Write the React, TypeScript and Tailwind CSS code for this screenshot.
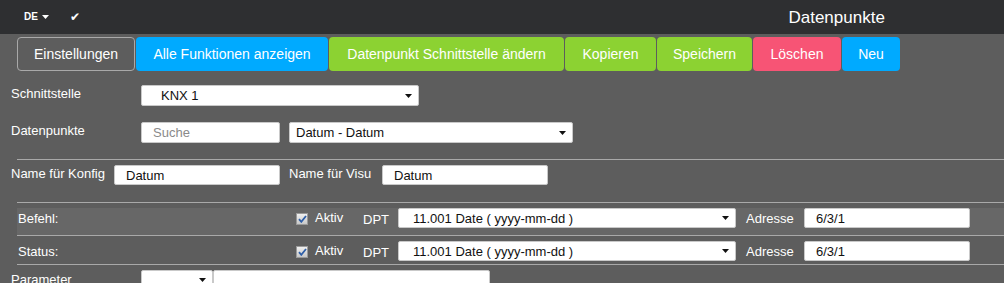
import type { ReactNode } from 'react';

const buttons = [
  { label: 'Einstellungen', w: 'w-[118px]', cls: 'bg-[#5d5d5d] border border-[#a9a9a9]' },
  { label: 'Alle Funktionen anzeigen', w: 'w-[192px]', cls: 'bg-[#00aaff]' },
  { label: 'Datenpunkt Schnittstelle ändern', w: 'w-[235px]', cls: 'bg-[#8cd232]' },
  { label: 'Kopieren', w: 'w-[91px]', cls: 'bg-[#8cd232]' },
  { label: 'Speichern', w: 'w-[95px]', cls: 'bg-[#8cd232]' },
  { label: 'Löschen', w: 'w-[88px]', cls: 'bg-[#f75475]' },
  { label: 'Neu', w: 'w-[58px]', cls: 'bg-[#00aaff]' },
];

function Caret({ color = '#111' }: { color?: string }) {
  return (
    <svg width="7" height="4" viewBox="0 0 7 4" className="shrink-0">
      <path d="M0 0h7L3.5 4z" fill={color} />
    </svg>
  );
}

function Select({ value, className, padL }: { value: string; className: string; padL: string }) {
  return (
    <div
      className={`flex items-center justify-between bg-white border border-[#c9c9c9] rounded-[2px] text-[13px] text-[#111] pr-[6px] ${padL} ${className}`}
    >
      <span className="leading-none">{value}</span>
      <Caret />
    </div>
  );
}

function Input({ value, className, muted }: { value: string; className: string; muted?: boolean }) {
  return (
    <div
      className={`flex items-center bg-white border border-[#c9c9c9] rounded-[2px] text-[13px] pl-[11px] ${muted ? 'text-[#8a8a8a]' : 'text-[#111]'} ${className}`}
    >
      <span className="leading-none">{value}</span>
    </div>
  );
}

function Checkbox() {
  return (
    <span className="mt-[5px] flex h-[12px] w-[12px] shrink-0 items-center justify-center border border-[#9a9a9a] bg-gradient-to-b from-[#f0f0f0] to-[#c8c8c8]">
      <svg width="9" height="8" viewBox="0 0 9 8">
        <path d="M1 4.2l2.3 2.6L8 1" fill="none" stroke="#2f5fa8" strokeWidth="1.8" />
      </svg>
    </span>
  );
}

function Label({ children, className = '' }: { children: ReactNode; className?: string }) {
  return <span className={`text-[13px] leading-[15px] text-white ${className}`}>{children}</span>;
}

function DptRow({ label, band }: { label: string; band?: boolean }) {
  return (
    <div className={`ml-[17px] flex items-start ${band ? 'bg-[#676767] h-[27px]' : 'h-[28px] pt-[5px]'}`}>
      <Label className="w-[279px] pl-[1px] pt-[3px]">{label}</Label>
      <Checkbox />
      <Label className="ml-[7px] w-[48px] pt-[2px]">Aktiv</Label>
      <Label className="w-[35px] pt-[4px]">DPT</Label>
      <Select value="11.001 Date ( yyyy-mm-dd )" padL="pl-[14px]" className="w-[338px] h-[20px]" />
      <Label className="ml-[10px] w-[58px] pt-[3px]">Adresse</Label>
      <Input value="6/3/1" className="w-[166px] h-[20px]" />
    </div>
  );
}

export default function App() {
  return (
    <div className="w-[1004px] h-[283px] overflow-hidden bg-[#5d5d5d] font-['Liberation_Sans',Arial,sans-serif] text-white">
      <header className="grid h-[34px] grid-cols-3 items-center bg-[#2e2f31]">
        <div className="flex items-center pl-[24px]">
          <span className="text-[10px] font-bold leading-none">DE</span>
          <span className="ml-[4px]">
            <Caret color="#fff" />
          </span>
          <span className="ml-[21px] text-[12px] leading-none">✔</span>
        </div>
        <div />
        <div className="text-center text-[17px] leading-none">Datenpunkte</div>
      </header>

      <div className="ml-[17px] mt-[3px] flex gap-[1px]">
        {buttons.map((b) => (
          <div
            key={b.label}
            className={`flex h-[34px] items-center justify-center rounded-[4px] text-[14px] text-white ${b.w} ${b.cls}`}
          >
            {b.label}
          </div>
        ))}
      </div>

      <div className="ml-[11px] mt-[14px] flex items-start">
        <Label className="w-[130px] pt-[1px]">Schnittstelle</Label>
        <Select value="KNX 1" padL="pl-[19px]" className="w-[278px] h-[21px]" />
      </div>

      <div className="ml-[11px] mt-[16px] flex items-start">
        <Label className="w-[130px] pt-[1px]">Datenpunkte</Label>
        <Input value="Suche" muted className="w-[139px] h-[21px]" />
        <Select value="Datum - Datum" padL="pl-[6px]" className="ml-[9px] w-[284px] h-[21px]" />
      </div>

      <div className="ml-[17px] mt-[16px] h-px bg-[#a9a9a9]" />

      <div className="ml-[11px] mt-[5px] flex items-start">
        <Label className="w-[103px] pt-[1px]">Name für Konfig</Label>
        <Input value="Datum" className="w-[166px] h-[20px]" />
        <Label className="ml-[9px] w-[93px] pt-[1px]">Name für Visu</Label>
        <Input value="Datum" className="w-[166px] h-[20px]" />
      </div>

      <div className="ml-[17px] mt-[17px] h-px bg-[#a9a9a9]" />
      <div className="h-[5px]" />
      <DptRow label="Befehl:" band />
      <div className="ml-[17px] h-px bg-[#a9a9a9]" />
      <DptRow label="Status:" />
      <div className="ml-[17px] h-px bg-[#a9a9a9]" />

      <div className="ml-[11px] mt-[5px] flex items-start">
        <Label className="w-[130px] pt-[2px]">Parameter</Label>
        <Select value="" padL="pl-[6px]" className="w-[72px] h-[20px]" />
        <Input value="" className="w-[277px] h-[20px]" />
      </div>
    </div>
  );
}
